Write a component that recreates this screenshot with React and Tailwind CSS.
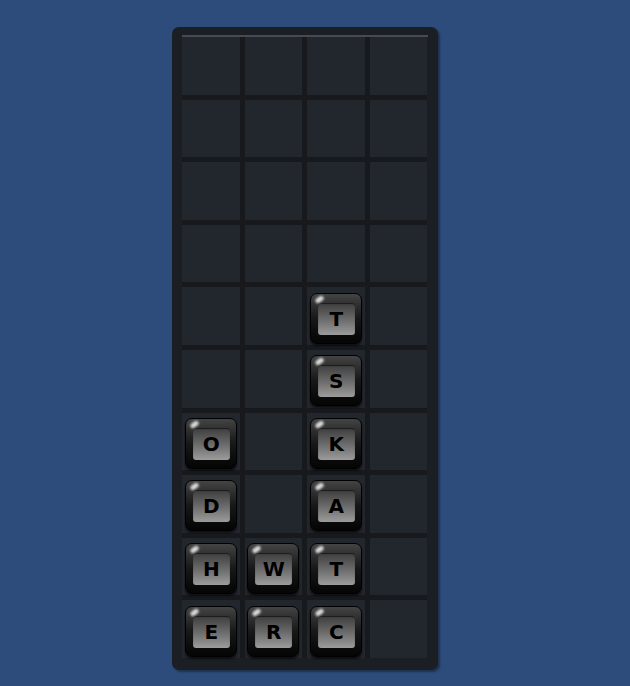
const columns = [
  [null, null, null, null, null, null, 'O', 'D', 'H', 'E'],
  [null, null, null, null, null, null, null, null, 'W', 'R'],
  [null, null, null, null, 'T', 'S', 'K', 'A', 'T', 'C'],
  [null, null, null, null, null, null, null, null, null, null],
];

function Tile({ letter }) {
  return (
    <div className="relative mt-[4px] w-[52px] h-[51px] rounded-[7px] bg-gradient-to-b from-[#444] via-[#181818] to-[#050505] border border-black pl-[7px] pr-[6px] pt-[9px] pb-[8px] shadow-[0_2px_2px_rgba(0,0,0,0.6)]">
      <div className="h-full w-full rounded-[3px] bg-gradient-to-b from-[#3e3e3e] via-[#6a6a6a] to-[#9c9c9c] flex items-center justify-center shadow-[inset_0_1px_1px_rgba(0,0,0,0.6)]">
        <span className="text-[20px] font-bold text-black leading-none font-['DejaVu_Sans',sans-serif]">{letter}</span>
      </div>
      <div className="absolute left-[4px] top-[3px] w-[9px] h-[5px] rounded-full bg-white/80 blur-[1px] -rotate-[35deg]" />
    </div>
  );
}

export default function App() {
  return (
    <div className="min-h-screen w-full bg-[#2d4b7b] pt-[27px] pl-[172px]">
      <div className="w-[266px] h-[643px] rounded-[7px] bg-[#1b1e23] shadow-[2px_2px_2px_rgba(0,0,0,0.35)] px-[10px] pt-[8px]">
        <div className="h-[2px] bg-[#454a55]" />
        <div className="grid grid-cols-4 grid-rows-[repeat(10,minmax(0,1fr))] grid-flow-col gap-[5px] w-[245px] h-[621px] bg-[#17191d]">
          {columns.flatMap((col, ci) =>
            col.map((letter, ri) => (
              <div key={`${ci}-${ri}`} className="bg-[#22262d] flex items-center justify-center">
                {letter && <Tile letter={letter} />}
              </div>
            ))
          )}
        </div>
      </div>
    </div>
  );
}
